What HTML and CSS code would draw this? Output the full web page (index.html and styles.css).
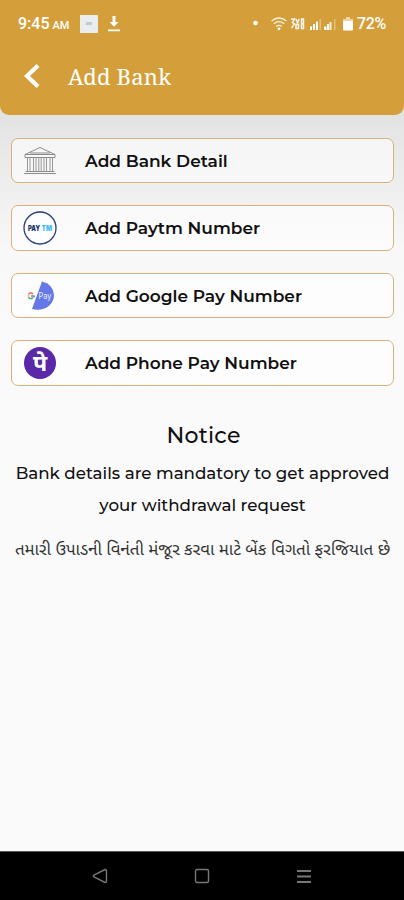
FILE: index.html
```
<!DOCTYPE html>
<html lang="en">
<head>
    <meta charset="UTF-8">
    <meta name="viewport" content="width=device-width, initial-scale=1.0">
    <title>Add Bank</title>
    <link rel="stylesheet" href="styles.css">
</head>
<body>
    <header class="header">
        <div class="status-bar">
            <span class="time">9:45 <small>AM</small></span>
            <span class="app-icon"></span>
            <svg class="download" width="12" height="16" viewBox="0 0 12 16">
                <path d="M4.500 0h3v6h3L6 10.800 1.500 6h3zM0 13.500h12v1.800H0z" fill="#fff"/>
            </svg>
            <svg class="signals" width="84" height="18" viewBox="0 0 84 18">
                <circle cx="2.500" cy="8" r="2.300" fill="#fff"/>
                <g fill="none" stroke="#fff" stroke-width="1.300" opacity=".85">
                    <path d="M18.500 6q7.500-6 15 0M20.800 8.700q5.200-4 10.400 0M23.200 11.400q2.800-2.200 5.600 0"/>
                </g>
                <circle cx="26" cy="13.800" r="1.400" fill="#fff"/>
                <g fill="none" stroke="#fff" stroke-width="1.500" opacity=".9">
                    <path d="M38 4h3.500l-2 3.500 2 1.500-3 4M43 4l1.500 4L46 4M43 9.500h2.500v4H43zM48.500 4h2v4.500h-2zM48.500 8.500h2v5h-2z"/>
                </g>
                <path d="M57 11.500h2V15h-2zM60 9h2v6h-2zM63 6.500h2V15h-2zM71 11.500h2.500V15H71zM74 9h2v6h-2z" fill="#fff"/>
                <path d="M76.500 7h2v8h-2z" fill="#fff" opacity=".8"/>
                <path d="M66.500 4H68v11h-1.500zM81 4h1.500v11H81z" fill="#fff" opacity=".35"/>
            </svg>
            <svg class="battery" width="10" height="14" viewBox="0 0 10 14">
                <path d="M3 0h4v2h3v3H0V2h3z" fill="#fff" opacity=".55"/>
                <rect y="4" width="10" height="9.500" rx="1" fill="#fff"/>
            </svg>
            <span class="percent">72%</span>
        </div>
        <div class="title-bar">
            <svg width="16" height="24" viewBox="0 0 16 24">
                <path d="M14 1.500L3 12l11 10.500" fill="none" stroke="#fff" stroke-width="4.200"/>
            </svg>
            <h1>Add Bank</h1>
        </div>
    </header>

    <main class="content">
        <div class="methods">
            <a class="method">
                <svg class="icon" width="34" height="34" viewBox="0 0 34 34" fill="none" stroke="#8c8c8c">
                    <path d="M2 10.500L17 3.500l15 7zM2 10.500v3h30v-3M7 9h20M1 29.500h32M2.500 27.500h29"/>
                    <path d="M4.500 14v13M7 14v13M10.500 14v13M13 14v13M15.800 14v13M18.200 14v13M21 14v13M23.500 14v13M27 14v13M29.500 14v13" stroke-width=".9"/>
                </svg>
                <span>Add Bank Detail</span>
            </a>
            <a class="method">
                <svg class="icon" width="34" height="34" viewBox="0 0 34 34">
                    <circle cx="17" cy="17" r="16" fill="#fff" stroke="#293b78" stroke-width="1.300"/>
                    <text class="paytm-logo" x="5" y="19.500" textLength="12" lengthAdjust="spacingAndGlyphs" fill="#18336d">PAY</text>
                    <text class="paytm-logo" x="18.500" y="19.500" textLength="10.500" lengthAdjust="spacingAndGlyphs" fill="#45bdf1">TM</text>
                </svg>
                <span>Add Paytm Number</span>
            </a>
            <a class="method">
                <svg class="icon" width="34" height="34" viewBox="0 0 34 34">
                    <path d="M19 2.500Q30 5 31 16c0 10.500-11 17-22 14z" fill="#6578e8"/>
                    <g fill="none" stroke-width="1.500">
                        <path d="M5.500 15.500A2.800 2.800 0 0 1 10 15" stroke="#e66b5c"/>
                        <path d="M5.500 15.500v3" stroke="#edba55"/>
                        <path d="M5.500 18.500a2.800 2.800 0 0 0 4.500 0" stroke="#59aa6c"/>
                        <path d="M8 17h3v1.500" stroke="#6387dd"/>
                    </g>
                    <text class="gpay-logo" x="15.500" y="20" textLength="13" lengthAdjust="spacingAndGlyphs">Pay</text>
                </svg>
                <span>Add Google Pay Number</span>
            </a>
            <a class="method">
                <svg class="icon" width="34" height="34" viewBox="0 0 34 34">
                    <circle cx="17" cy="17" r="16" fill="#5929a7"/>
                    <text class="phonepe-logo" x="17" y="25" text-anchor="middle">पे</text>
                </svg>
                <span>Add Phone Pay Number</span>
            </a>
        </div>

        <section class="notice">
            <h2>Notice</h2>
            <p>Bank details are mandatory to get approved<br>your withdrawal request</p>
            <p class="gujarati" lang="gu">તમારી ઉપાડની વિનંતી મંજૂર કરવા માટે બેંક વિગતો ફરજિયાત છે</p>
        </section>
    </main>

    <nav class="nav-bar">
        <svg width="16" height="16" viewBox="0 0 16 16"><path d="M13 1.500L2 7q-1.500 1 0 2l11 5.500q1.500 0 1.500-1.500V3q0-1.500-1.500-1.500z"/></svg>
        <svg width="16" height="16" viewBox="0 0 16 16"><rect x="1.500" y="1.500" width="13" height="13" rx="1.500"/></svg>
        <svg width="16" height="16" viewBox="0 0 16 16"><path d="M1 3h14M1 8.500h14M1 14h14" stroke-width="2"/></svg>
    </nav>
</body>
</html>
```
FILE: styles.css
```
* {
    box-sizing: border-box;
}
body {
    margin: 0;
    height: 900px;
    display: flex;
    flex-direction: column;
    overflow: hidden;
    background: linear-gradient(#e2e2e2 110px, #eeeeee 185px, #f8f8f8 250px, #fafafa 330px);
    font-family: Montserrat, Inter, "Noto Sans", sans-serif;
    color: #111;
}
.header {
    height: 115px;
    background: #d49f3b;
    border-radius: 0 0 9px 9px;
    color: #fff;
}
.status-bar {
    height: 46px;
    padding: 1px 17px 0 18px;
    display: flex;
    align-items: center;
    font-family: Roboto, sans-serif;
}
.time {
    width: 62px;
    font-size: 16px;
    font-weight: 500;
    white-space: nowrap;
}
.time small {
    font-size: 11px;
    margin-left: -1px;
}
.app-icon {
    width: 18px;
    height: 18px;
    background: #e9edef;
    display: flex;
    align-items: center;
    justify-content: center;
}
.app-icon::after {
    content: "";
    width: 6px;
    height: 3px;
    background: #c3cacd;
}
.download {
    margin-left: 10px;
}
.signals {
    margin-left: auto;
}
.battery {
    margin: 1px 4px 0 6px;
}
.percent {
    font-size: 16px;
    font-weight: 500;
    width: 30px;
    letter-spacing: -0.3px;
}
.title-bar {
    display: flex;
    align-items: center;
    height: 60px;
    padding-left: 24px;
}
.title-bar h1 {
    margin: 0 0 0 28px;
    font-family: "Noto Serif", "DejaVu Serif", serif;
    font-size: 22px;
    font-weight: 400;
    letter-spacing: 0.2px;
}
.content {
    flex: 1;
    padding: 22.8px 10px 0 11px;
}
.methods {
    display: flex;
    flex-direction: column;
    gap: 22px;
}
.method {
    display: flex;
    align-items: center;
    height: 45.5px;
    padding-left: 11px;
    border: 1px solid #dbb07b;
    border-radius: 7px;
    background: rgba(255, 255, 255, 0.6);
    font-size: 17px;
    font-weight: 600;
}
.icon {
    margin-right: 28px;
}
.paytm-logo {
    font: 900 7px Inter, sans-serif;
}
.gpay-logo {
    fill: #eef0ff;
    font: 9px Inter, sans-serif;
}
.phonepe-logo {
    fill: #fff;
    font: bold 23px "Noto Sans Devanagari", "Noto Sans", sans-serif;
}
.notice {
    margin-top: 34px;
    text-align: center;
}
.notice h2 {
    margin: 0 0 0 2px;
    font-size: 22px;
    font-weight: 500;
    line-height: 32px;
    letter-spacing: 0.2px;
}
.notice p {
    margin: 5px 0 0;
    font-size: 16.7px;
    font-weight: 500;
    line-height: 32px;
    white-space: nowrap;
}
.notice .gujarati {
    margin-top: 15px;
    font-family: "Noto Sans Gujarati", "Noto Sans", sans-serif;
    font-size: 16.9px;
    font-weight: 400;
    line-height: 30px;
    color: #333;
}
.nav-bar {
    height: 49px;
    padding: 0 92px;
    display: flex;
    align-items: center;
    justify-content: space-between;
    background: #000;
    border-top: 1px solid #555;
}
.nav-bar svg {
    fill: none;
    stroke: #777;
    stroke-width: 1.4;
}
```
